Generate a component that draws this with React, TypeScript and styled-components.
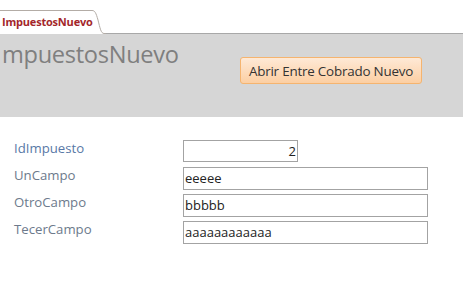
import { createGlobalStyle } from 'styled-components';
import styled from 'styled-components';

const GlobalStyle = createGlobalStyle`
  body {
    margin: 0;
    background: #ffffff;
    font-family: 'Open Sans', 'Liberation Sans', sans-serif;
  }
`;

const fields = [
  { label: 'IdImpuesto', value: '2', numeric: true },
  { label: 'UnCampo', value: 'eeeee' },
  { label: 'OtroCampo', value: 'bbbbb' },
  { label: 'TecerCampo', value: 'aaaaaaaaaaaa' },
];

const App = () => {
  return (
    <Page>
      <GlobalStyle />
      <TabBar>
        <Tab>ImpuestosNuevo</Tab>
        <TabEdge width="16" height="24" viewBox="0 0 16 24">
          <path d="M0 0.5 H2 C5 0.5 6 3 8 10 C10 18 11 23.5 14 23.5 H16" fill="#fff" stroke="#b3aca6" strokeWidth="1" />
        </TabEdge>
        <TabFiller />
      </TabBar>
      <Header>
        <Title>mpuestosNuevo</Title>
        <OpenButton>Abrir Entre Cobrado Nuevo</OpenButton>
      </Header>
      <Detail>
        {fields.map((f, i) => (
          <Row key={f.label}>
            <Label $first={i === 0}>{f.label}</Label>
            <Field $narrow={f.numeric} $right={f.numeric}>{f.value}</Field>
          </Row>
        ))}
      </Detail>
    </Page>
  );
};

export default App;

const Page = styled.div`
  width: 463px;
  height: 298px;
  overflow: hidden;
`;

const TabBar = styled.div`
  display: flex;
  align-items: flex-end;
  height: 34px;
`;

const Tab = styled.div`
  height: 23px;
  padding: 0 0 0 2px;
  width: 88px;
  border-top: 1px solid #b3aca6;
  background: #fff;
  color: #a3262a;
  font-weight: bold;
  font-size: 11px;
  line-height: 22px;
  letter-spacing: -0.2px;
`;

const TabEdge = styled.svg`
  display: block;
  flex: none;
`;

const TabFiller = styled.div`
  flex: 1;
  height: 24px;
  border-bottom: 1px solid #a8a8a8;
  box-sizing: border-box;
`;

const Header = styled.div`
  display: flex;
  align-items: flex-start;
  height: 83px;
  background: #d6d6d6;
`;

const Title = styled.div`
  margin: 4px 0 0 2px;
  width: 238px;
  color: #7f7f7f;
  font-size: 23.6px;
  line-height: 32px;
  letter-spacing: -0.3px;
`;

const OpenButton = styled.button`
  margin-top: 23px;
  width: 182px;
  height: 27px;
  padding: 0;
  border: 1px solid #f5b46f;
  border-radius: 3px;
  background: linear-gradient(#fee9d6, #fccfa3);
  color: #333;
  font-family: 'Open Sans', 'Liberation Sans', sans-serif;
  font-size: 13.4px;
  letter-spacing: -0.2px;
`;

const Detail = styled.div`
  display: flex;
  flex-direction: column;
  gap: 5px;
  padding: 23px 0 0 14px;
`;

const Row = styled.div`
  display: flex;
  align-items: flex-start;
  height: 22px;
`;

const Label = styled.div<{ $first?: boolean }>`
  width: 169px;
  color: ${({ $first }) => ($first ? '#5878a6' : '#6d7a8c')};
  font-size: 13.2px;
  line-height: 17px;
`;

const Field = styled.div<{ $narrow?: boolean; $right?: boolean }>`
  box-sizing: border-box;
  width: ${({ $narrow }) => ($narrow ? '115px' : '245px')};
  height: ${({ $narrow }) => ($narrow ? '22px' : '23px')};
  border: 1px solid #a3a3a3;
  background: #fff;
  padding: 0 1px;
  text-align: ${({ $right }) => ($right ? 'right' : 'left')};
  color: #222;
  font-size: 13px;
  line-height: 20px;
`;
